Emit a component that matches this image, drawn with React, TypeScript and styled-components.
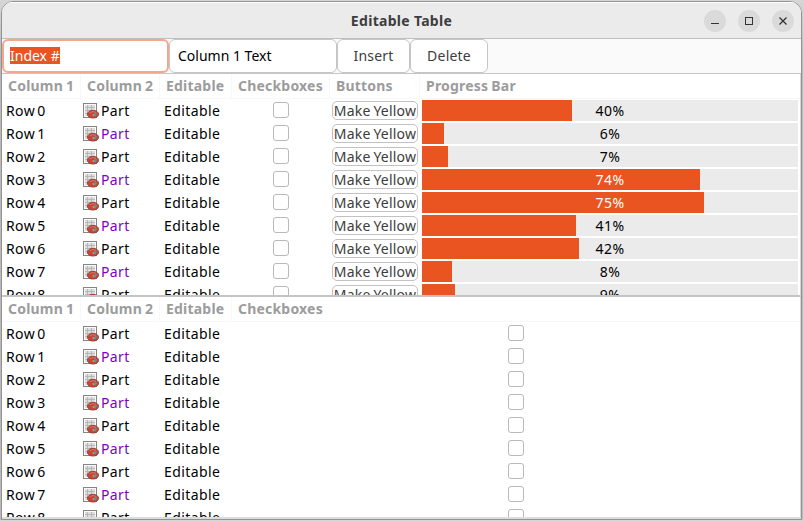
import React from "react";
import styled, { createGlobalStyle } from "styled-components";

const Global = createGlobalStyle`
  * { box-sizing: border-box; }
  body {
    margin: 0;
    background: linear-gradient(#d6d6d6, #b9b9b9 60px);
    font-family: "Noto Sans", "Open Sans", sans-serif;
    font-size: 14px;
    color: #000;
    overflow: hidden;
  }
  #root { display: flow-root; }
`;

const Window = styled.div`
  display: flex;
  flex-direction: column;
  width: 801px;
  height: 519px;
  margin: 1px 0 0 1px;
  border: 1px solid #939393;
  border-radius: 12px 12px 0 0;
  overflow: hidden;
  background: #fff;
`;

const TitleBar = styled.header`
  display: grid;
  grid-template-columns: 1fr auto 1fr;
  align-items: center;
  height: 37px;
  flex: none;
  background: #ebebeb;
  border-top: 1px solid #fff;
  border-bottom: 1px solid #bfbfbf;
`;

const Title = styled.h1`
  grid-column: 2;
  margin: 0;
  font-size: 14px;
  line-height: 20px;
  font-weight: 700;
  letter-spacing: 0.3px;
  color: #3d3d3d;
`;

const WindowControls = styled.div`
  display: flex;
  justify-content: flex-end;
  gap: 12px;
  padding-right: 7px;
`;

const ControlButton = styled.button`
  width: 22px;
  height: 22px;
  padding: 0;
  border: 0;
  border-radius: 50%;
  background: #dadada;
  svg { display: block; }
`;

const Toolbar = styled.div`
  display: flex;
  flex: none;
  height: 35px;
  background: #fafafa;
  border-bottom: 1px solid #c6c6c6;
`;

const Entry = styled.div<{ $focused?: boolean }>`
  width: ${(p) => (p.$focused ? 167 : 168)}px;
  height: 34px;
  padding: ${(p) => (p.$focused ? "4px 6px" : "5px 8px")};
  border: ${(p) => (p.$focused ? "2px solid #f3a78f" : "1px solid #c6c6c6")};
  border-radius: 6px;
  background: #fff;
  line-height: 22px;
`;

const Selection = styled.span`
  display: inline-block;
  height: 17px;
  line-height: 17px;
  background: #e95420;
  color: #fff;
`;

const ToolButton = styled.button<{ $width: number }>`
  width: ${(p) => p.$width}px;
  height: 34px;
  padding: 0 0 2px;
  border: 1px solid #c6c6c6;
  border-radius: 6px;
  background: #fff;
  font: inherit;
  letter-spacing: 0.2px;
  color: #3d3d3d;
`;

const TableView = styled.section<{ $height: number; $columns: string }>`
  display: grid;
  grid-template-columns: ${(p) => p.$columns};
  grid-template-rows: 25px;
  grid-auto-rows: 23px;
  flex: none;
  height: ${(p) => p.$height}px;
  width: 798px;
  overflow: hidden;
  background: #fff;
`;

const TableFrame = styled.div<{ $last?: boolean }>`
  flex: none;
  border-right: 1px solid #d6d6d6;
  border-bottom: 2px solid ${(p) => (p.$last ? "#dcdcdc" : "#c4c4c4")};
`;

const HeaderCell = styled.div<{ $line?: boolean }>`
  padding-left: 6px;
  border-bottom: 1px solid #f8f8f8;
  border-right: ${(p) => (p.$line ? "1px solid #f8f8f8" : "0")};
  line-height: 24px;
  font-weight: 700;
  letter-spacing: 0.2px;
  word-spacing: -0.8px;
  color: #9c9c9c;
  white-space: nowrap;
`;

const Cell = styled.div<{ $pad?: number; $center?: boolean; $color?: string }>`
  display: flex;
  align-items: center;
  justify-content: ${(p) => (p.$center ? "center" : "flex-start")};
  padding-left: ${(p) => p.$pad ?? 0}px;
  gap: 2px;
  line-height: 22px;
  letter-spacing: 0.4px;
  word-spacing: -2px;
  white-space: nowrap;
  color: ${(p) => p.$color ?? "#000"};
`;

const Checkbox = styled.span`
  width: 16px;
  height: 16px;
  margin-bottom: 1px;
  border: 1px solid #b9b9b9;
  border-radius: 3px;
  background: #fff;
`;

const CellButton = styled.button`
  width: 86px;
  height: 19px;
  padding: 0;
  border: 1px solid #c2c2c2;
  border-radius: 5px;
  background: #fff;
  font: inherit;
  line-height: 17px;
  letter-spacing: 0.2px;
  word-spacing: -1px;
  color: #3d3d3d;
  white-space: nowrap;
`;

const Progress = styled.div`
  display: grid;
  width: 376px;
  height: 21px;
  margin-left: 2px;
  background: #ebebeb;
`;

const Fill = styled.div`
  grid-area: 1 / 1;
  background: #e95420;
`;

const Percent = styled.span<{ $light: boolean }>`
  grid-area: 1 / 1;
  text-align: center;
  line-height: 21px;
  letter-spacing: 0.5px;
  color: ${(p) => (p.$light ? "#fff" : "#000")};
`;

const SheetIcon = () => (
  <svg width="16" height="16" viewBox="0 0 16 16">
    <rect x="0.5" y="0.5" width="13" height="14" fill="#fafafa" stroke="#858585" />
    <rect x="2" y="2" width="10" height="11" fill="#dedede" />
    <path d="M2 4.5h10M2 7.5h10M2 10.5h10M4.5 2v11M8.5 2v11" stroke="#b0b0b0" strokeWidth="0.8" />
    <ellipse cx="10" cy="11.2" rx="5.6" ry="3.9" fill="#c2473a" stroke="#96382e" strokeWidth="0.8" />
    <path d="M6.5 9.8q3.5-2.4 6.5-0.4" stroke="#dc7767" fill="none" />
    <path d="M9.3 11.2l2 0.3-1 2z" fill="#e8b04c" />
    <path d="M11.6 10.2l2.6 0.4-1.8 2.8-1.4-0.9z" fill="#4f9bb5" />
  </svg>
);

const values = [40, 6, 7, 74, 75, 41, 42, 8, 9];

const Rows = ({ full }: { full?: boolean }) => (
  <>
    {values.map((value, i) => (
      <React.Fragment key={i}>
        <Cell $pad={4}>Row {i}</Cell>
        <Cell $pad={2} $color={i % 2 ? "#8000c0" : undefined}>
          <SheetIcon />
          Part
        </Cell>
        <Cell $pad={4}>Editable</Cell>
        <Cell $center><Checkbox /></Cell>
        {full && (
          <>
            <Cell $center><CellButton>Make Yellow</CellButton></Cell>
            <Cell>
              <Progress>
                <Fill style={{ width: Math.floor((376 * value) / 100) }} />
                <Percent $light={value > 50}>{value}%</Percent>
              </Progress>
            </Cell>
          </>
        )}
      </React.Fragment>
    ))}
  </>
);

const Headers = ({ names }: { names: string[] }) => (
  <>
    {names.map((name, i) => (
      <HeaderCell key={name} $line={i < names.length - 1}>{name}</HeaderCell>
    ))}
  </>
);

export default function App() {
  return (
    <>
      <Global />
      <Window>
        <TitleBar>
          <Title>Editable Table</Title>
          <WindowControls>
            <ControlButton aria-label="Minimize">
              <svg width="22" height="22"><path d="M7 13.5h8" stroke="#333" /></svg>
            </ControlButton>
            <ControlButton aria-label="Maximize">
              <svg width="22" height="22"><rect x="7.5" y="7.5" width="7" height="7" fill="none" stroke="#333" /></svg>
            </ControlButton>
            <ControlButton aria-label="Close">
              <svg width="22" height="22"><path d="M7.5 7.5l7 7M14.5 7.5l-7 7" stroke="#333" strokeWidth="1.3" /></svg>
            </ControlButton>
          </WindowControls>
        </TitleBar>
        <Toolbar>
          <Entry $focused><Selection>Index #</Selection></Entry>
          <Entry>Column 1 Text</Entry>
          <ToolButton $width={73}>Insert</ToolButton>
          <ToolButton $width={78}>Delete</ToolButton>
        </Toolbar>
        <TableFrame>
          <TableView $height={221} $columns="79px 79px 72px 98px 90px 1fr">
            <Headers names={["Column 1", "Column 2", "Editable", "Checkboxes", "Buttons", "Progress Bar"]} />
            <Rows full />
          </TableView>
        </TableFrame>
        <TableFrame $last>
          <TableView $height={220} $columns="79px 79px 72px 1fr">
            <Headers names={["Column 1", "Column 2", "Editable", "Checkboxes"]} />
            <Rows />
          </TableView>
        </TableFrame>
      </Window>
    </>
  );
}
